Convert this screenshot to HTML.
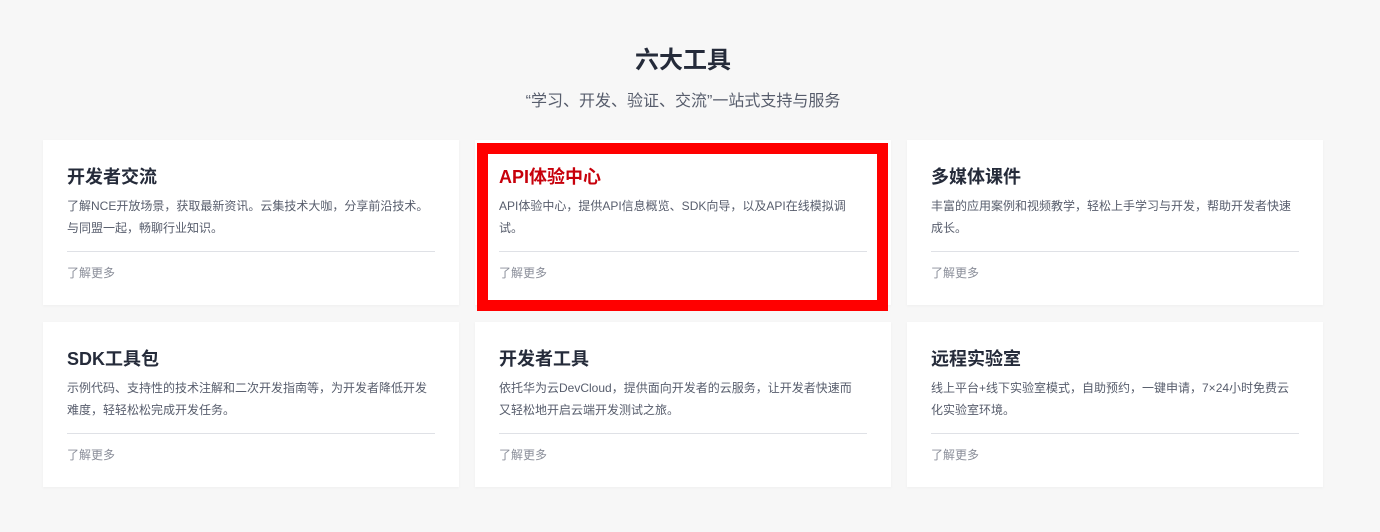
<!DOCTYPE html>
<html><head><meta charset="utf-8"><style>
*{margin:0;padding:0;box-sizing:border-box}
body{width:1380px;height:532px;background:#f7f7f7;font-family:"Liberation Sans","Noto Sans CJK SC",sans-serif;position:relative;overflow:hidden}
h1{position:absolute;top:40px;left:-7px;width:1380px;text-align:center;font-size:24px;font-weight:bold;color:#252b3a}
.sub{position:absolute;top:87px;left:-7px;width:1380px;text-align:center;font-size:16px;color:#575d6c}
.card{position:absolute;width:416px;height:165px;background:#fff;box-shadow:0 1px 3px rgba(0,0,0,0.04)}
.card h3{position:absolute;left:24px;top:23px;font-size:18px;font-weight:bold;color:#252b3a}
.card p{position:absolute;left:24px;top:55px;width:362px;font-size:12px;line-height:22px;color:#575d6c}
.card .hr{position:absolute;left:24px;right:24px;top:111px;height:1px;background:#dfe1e6}
.card .m{position:absolute;left:24px;top:124px;font-size:12px;color:#8a8e99}
.red{position:absolute;left:477px;top:143px;width:411px;height:168px;border:11px solid #ff0000}
</style></head><body>
<h1>六大工具</h1>
<div class="sub">“学习、开发、验证、交流”一站式支持与服务</div>
<div class="card" style="left:43px;top:140px"><h3>开发者交流</h3><p>了解NCE开放场景，获取最新资讯。云集技术大咖，分享前沿技术。与同盟一起，畅聊行业知识。</p><div class="hr"></div><div class="m">了解更多</div></div>
<div class="card" style="left:475px;top:140px"><h3 style="color:#c7000b">API体验中心</h3><p>API体验中心，提供API信息概览、SDK向导，以及API在线模拟调试。</p><div class="hr"></div><div class="m">了解更多</div></div>
<div class="card" style="left:907px;top:140px"><h3>多媒体课件</h3><p>丰富的应用案例和视频教学，轻松上手学习与开发，帮助开发者快速成长。</p><div class="hr"></div><div class="m">了解更多</div></div>
<div class="card" style="left:43px;top:322px"><h3>SDK工具包</h3><p>示例代码、支持性的技术注解和二次开发指南等，为开发者降低开发难度，轻轻松松完成开发任务。</p><div class="hr"></div><div class="m">了解更多</div></div>
<div class="card" style="left:475px;top:322px"><h3>开发者工具</h3><p>依托华为云DevCloud，提供面向开发者的云服务，让开发者快速而又轻松地开启云端开发测试之旅。</p><div class="hr"></div><div class="m">了解更多</div></div>
<div class="card" style="left:907px;top:322px"><h3>远程实验室</h3><p>线上平台+线下实验室模式，自助预约，一键申请，7×24小时免费云化实验室环境。</p><div class="hr"></div><div class="m">了解更多</div></div>
<div class="red"></div>
</body></html>
